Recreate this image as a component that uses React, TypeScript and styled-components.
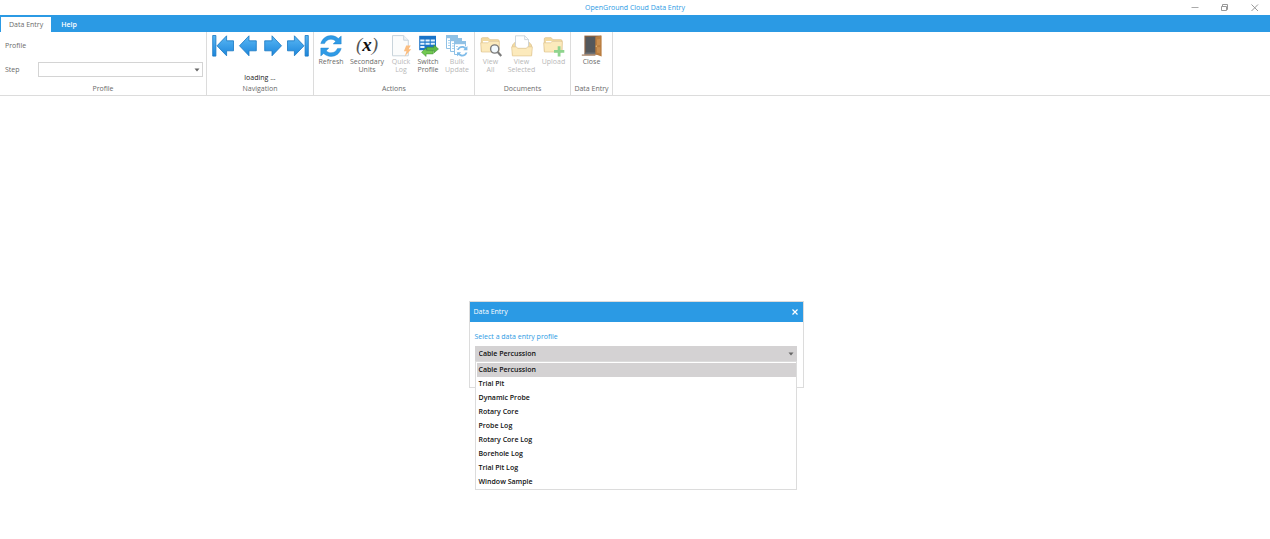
import React, { useState } from 'react';
import styled, { createGlobalStyle, css } from 'styled-components';

const blue = '#2b9ae4';
const line = '#dcdcdc';

const GlobalStyle = createGlobalStyle`
  * { box-sizing: border-box; }
  body {
    margin: 0;
    background: #fff;
    color: #6a6a6a;
    font-family: "Open Sans", "Noto Sans", sans-serif;
    font-size: 7px;
    line-height: 8px;
  }
  button, select { font: inherit; color: inherit; }
`;

const resetButton = css`
  border: 0;
  padding: 0;
  margin: 0;
  background: none;
`;

const Page = styled.div`
  display: flex;
  flex-direction: column;
  min-height: 100vh;
`;

const TitleBar = styled.header`
  display: grid;
  grid-template-columns: 1fr auto 1fr;
  align-items: center;
  height: 15px;
`;

const Title = styled.h1`
  grid-column: 2;
  margin: 0;
  font-size: 7px;
  font-weight: 400;
  color: ${blue};
`;

const WindowControls = styled.div`
  display: flex;
  justify-content: flex-end;
  gap: 20px;
  padding-right: 10px;
`;

const WindowButton = styled.button`
  ${resetButton}
  display: flex;
  width: 10px;
  height: 10px;
`;

const TabStrip = styled.nav`
  display: flex;
  height: 17px;
  padding: 2px 1px 0;
  background: ${blue};
`;

const Tab = styled.button<{ $active?: boolean }>`
  ${resetButton}
  padding: 0 8px;
  margin-right: 2px;
  background: ${(p) => (p.$active ? '#fff' : 'transparent')};
  color: ${(p) => (p.$active ? '#6a6a6a' : '#fff')};
  font-weight: ${(p) => (p.$active ? 400 : 600)};
`;

const Ribbon = styled.div`
  display: flex;
  height: 64px;
  border-bottom: 1px solid ${line};
`;

const Group = styled.section<{ $width: number }>`
  display: flex;
  flex-direction: column;
  flex: 0 0 ${(p) => p.$width}px;
  border-right: 1px solid ${line};
`;

const GroupBody = styled.div`
  display: flex;
  flex: 1;
  justify-content: center;
  padding-top: 3px;
`;

const GroupLabel = styled.h2`
  margin: 0;
  padding-bottom: 2px;
  font-size: 7px;
  font-weight: 400;
  text-align: center;
`;

const Fields = styled.div`
  display: grid;
  flex: 1;
  grid-template-columns: 33px 1fr;
  grid-template-rows: 15px 15px;
  row-gap: 9px;
  align-items: center;
  align-content: start;
  padding: 6px 3px 0 5px;
`;

const SelectBox = styled.div`
  display: grid;
  align-items: center;
  & > * { grid-area: 1 / 1; }
  & > svg { justify-self: end; margin-right: 3px; pointer-events: none; }
`;

const Select = styled.select<{ $filled?: boolean }>`
  appearance: none;
  width: 100%;
  height: 15px;
  padding: 0 3px;
  border: 1px solid ${(p) => (p.$filled ? '#d4d2d3' : '#d4d4d4')};
  border-radius: 0;
  background: ${(p) => (p.$filled ? '#d4d2d3' : '#fff')};
  color: #111;
  font-weight: ${(p) => (p.$filled ? 600 : 400)};
  outline: none;
`;

const Navigation = styled.div`
  display: flex;
  flex-direction: column;
  justify-content: space-between;
`;

const NavButtons = styled.div`
  display: flex;
  gap: 3px;
`;

const IconButton = styled.button`
  ${resetButton}
  display: flex;
`;

const Status = styled.output`
  padding-bottom: 3px;
  color: #222;
  text-align: center;
`;

const Tool = styled.button<{ $width: number }>`
  ${resetButton}
  display: flex;
  flex-direction: column;
  align-items: center;
  gap: 1px;
  width: ${(p) => p.$width}px;
  text-align: center;
  &:disabled { color: #b8b8b8; }
  &:disabled svg { opacity: 0.55; }
`;

const ToolLabel = styled.span`
  width: min-content;
  white-space: pre;
`;

const FormulaIcon = styled.span`
  height: 22px;
  color: #555;
  font: italic 19px/20px "Liberation Serif", serif;
  & > b { color: #111; }
`;

const Workspace = styled.main`
  display: flex;
  flex: 1;
  align-items: flex-start;
  justify-content: center;
  padding: 205px 8px 110px 10px;
`;

const Dialog = styled.section`
  width: 335px;
  max-width: 100%;
  border: 1px solid ${line};
`;

const DialogHeader = styled.header`
  display: flex;
  align-items: center;
  justify-content: space-between;
  height: 20px;
  padding: 0 4px;
  background: ${blue};
  color: #fff;
`;

const DialogTitle = styled.h2`
  margin: 0;
  font-size: 7px;
  font-weight: 400;
`;

const DialogBody = styled.div`
  display: flex;
  flex-direction: column;
  gap: 5px;
  height: 65px;
  padding: 11px 6px 0 5px;
`;

const Prompt = styled.label`
  color: ${blue};
`;

const Dropdown = styled.div`
  position: relative;
`;

const OptionList = styled.div`
  position: absolute;
  top: 100%;
  left: 0;
  right: 0;
  padding: 1px 0 0 1px;
  border: 1px solid ${line};
  background: #fff;
`;

const Option = styled.button`
  ${resetButton}
  display: block;
  width: 100%;
  height: 14px;
  padding: 0 2px;
  color: #111;
  font-weight: 600;
  text-align: left;
  &[aria-selected='true'] { background: #d4d2d3; }
`;

const Caret = () => (
  <svg width="6" height="4" viewBox="0 0 6 4"><path d="M.5.5h5L3 3.5z" fill="#666" /></svg>
);

const ArrowIcon = ({ bar, flip }: { bar?: boolean; flip?: boolean }) => (
  <svg width="22" height="22" viewBox="0 0 22 22">
    <defs>
      <linearGradient id="arrowFill" x1="0" y1="0" x2="0" y2="1">
        <stop offset="0" stopColor="#5bb8f4" />
        <stop offset="1" stopColor="#1c86dc" />
      </linearGradient>
    </defs>
    <g transform={flip ? 'translate(22 0) scale(-1 1)' : undefined} fill="url(#arrowFill)" stroke="#1877c2" strokeWidth=".8" strokeLinejoin="round">
      {bar && <path d="M.7.5h3.2v20.6H.7z" />}
      <path d={bar ? 'M5 10.8 14.6.8v5h6.9v10h-6.9v5z' : 'M2.5 10.8 12 .8v5h7.3v10H12v5z'} />
    </g>
  </svg>
);

const refreshPath = 'M.8 8.6C2.2 3.6 6.2.6 11 .6c2.9 0 5.4 1.1 7.3 2.9L21.2 1v8h-8l2.5-2.7C14.4 4.9 12.9 4.2 11 4.2 8 4.2 5.7 5.8 4.5 8.6z';

const RefreshShape = () => (
  <>
    <path d={refreshPath} />
    <path d={refreshPath} transform="rotate(180 11 11)" />
  </>
);

const RefreshIcon = () => (
  <svg width="22" height="22" viewBox="0 0 22 22" fill="#2f9be6" stroke="#1a7cc4" strokeWidth=".4">
    <RefreshShape />
  </svg>
);

const QuickLogIcon = () => (
  <svg width="22" height="22" viewBox="0 0 22 22">
    <path d="M2.5.6h11.2l4.6 4.6v15.6H2.5z" fill="#f8fafb" stroke="#9db1bf" />
    <path d="M13.7.6v4.6h4.6" fill="#e3eaef" stroke="#9db1bf" />
    <path d="M16.2 10.5h4.6l-2.2 3.8h2.7l-6.6 7.2 1.8-5.2h-2.6z" fill="#f98a1c" />
  </svg>
);

const SwitchIcon = () => (
  <svg width="22" height="22" viewBox="0 0 22 22">
    <path d="M2.2.8h16.8v14.4H2.2z" fill="#1b74c9" />
    <path d="M3.3 4.4h4.2v2.1H3.3zm5.2 0h4.2v2.1H8.5zm5.2 0h4.2v2.1h-4.2zM3.3 7.7h4.2v2.1H3.3zm5.2 0h4.2v2.1H8.5zm5.2 0h4.2v2.1h-4.2zM3.3 11h4.2v2.1H3.3z" fill="#e4f3fd" />
    <path d="m21.5 14-4.6-4.2v2.5H9.8v3.3h7.1V18z" fill="#5db944" stroke="#3b8a30" strokeWidth=".5" />
    <path d="m4.5 17.3 4.6-4.2v2.5h7.1v3.3H9.1v2.6z" fill="#72c952" stroke="#3b8a30" strokeWidth=".5" />
  </svg>
);

const Sheet = ({ x, y }: { x: number; y: number }) => (
  <g transform={`translate(${x} ${y})`}>
    <path d="M.5.5h11v13H.5z" fill="#fff" stroke="#378fd1" />
    <path d="M0 0h12v3.2H0z" fill="#378fd1" />
    <path d="M2 5.5h2M5 5.5h5M2 8h2M5 8h5M2 10.5h2M5 10.5h5" stroke="#5faee2" />
  </g>
);

const BulkIcon = () => (
  <svg width="22" height="22" viewBox="0 0 22 22">
    <Sheet x={0} y={0} />
    <Sheet x={4} y={3} />
    <Sheet x={8} y={6} />
    <circle cx="16" cy="16" r="6" fill="#fff" />
    <g transform="translate(10.6 10.6) scale(.51)" fill="#1886d8"><RefreshShape /></g>
  </svg>
);

const Folder = () => (
  <>
    <path d="M1.3 16.5V3.9c0-.7.4-1.2 1.2-1.2h5.7l1.7 2h8c.7 0 1.1.4 1.1 1v10.8z" fill="#e9bd55" stroke="#bb8b2c" strokeWidth=".7" />
    <path d="M3 6h14.8v3H3z" fill="#fff" />
    <path d="M.7 7.8h6.8l1.5-1.3h10.4L18.7 17H1.5z" fill="#fad986" stroke="#c99a3c" strokeWidth=".7" />
  </>
);

const ViewAllIcon = () => (
  <svg width="22" height="22" viewBox="0 0 22 22">
    <Folder />
    <circle cx="14.7" cy="14" r="4.1" fill="#e9f5fc" stroke="#111" strokeWidth="1.4" />
    <path d="m17.7 17 3.6 4" stroke="#111" strokeWidth="2.2" />
  </svg>
);

const ViewSelectedIcon = () => (
  <svg width="22" height="22" viewBox="0 0 22 22">
    <path d="M1.5 20V10l2.8-3h13.5l2.7 3v10z" fill="#e9bd55" stroke="#bb8b2c" strokeWidth=".7" />
    <path d="M4.5.8h9.2l3.8 3.8v9H4.5z" fill="#fff" stroke="#98a7b2" strokeWidth=".8" />
    <path d="M13.7.8v3.8h3.8" fill="none" stroke="#98a7b2" strokeWidth=".8" />
    <path d="M.6 11.8h4.8l1.2 1.5h8.8l1.2-1.5h4.8l-.8 9.1H1.4z" fill="#fad986" stroke="#c99a3c" strokeWidth=".7" />
  </svg>
);

const UploadIcon = () => (
  <svg width="22" height="22" viewBox="0 0 22 22">
    <Folder />
    <path d="M14.7 11.2h2.8v3.7h3.8v2.8h-3.8v3.8h-2.8v-3.8H11v-2.8h3.7z" fill="#32b232" />
  </svg>
);

const DoorIcon = () => (
  <svg width="22" height="22" viewBox="0 0 22 22">
    <path d="M3.4.6H20v19H3.4z" fill="#8a6142" />
    <path d="M4.6 1.8h10V19h-10z" fill="#54585c" />
    <path d="M4.6 17.6h10v1.6H3.2z" fill="#6d7175" />
    <path d="M14.4 1.8 20.6.4v21.2l-6.2-2.4z" fill="#b97d40" />
    <path d="m16 4.4 3.2-.7v6.4l-3.2.3zm0 7.6 3.2.2v6.2L16 17.4z" fill="#c98f50" />
    <path d="M.8 19.5h13.6v1.2H.8z" fill="#a07a5c" />
    <circle cx="15.3" cy="11.2" r=".6" fill="#f1d38b" />
  </svg>
);

const profiles = [
  'Cable Percussion', 'Trial Pit', 'Dynamic Probe', 'Rotary Core', 'Probe Log',
  'Rotary Core Log', 'Borehole Log', 'Trial Pit Log', 'Window Sample',
];

interface ToolItem {
  label: string;
  width: number;
  icon: React.ReactNode;
  disabled?: boolean;
}

const actions: ToolItem[] = [
  { label: 'Refresh', width: 30, icon: <RefreshIcon /> },
  { label: 'Secondary\nUnits', width: 42, icon: <FormulaIcon>(<b>x</b>)</FormulaIcon> },
  { label: 'Quick\nLog', width: 26, icon: <QuickLogIcon />, disabled: true },
  { label: 'Switch\nProfile', width: 28, icon: <SwitchIcon /> },
  { label: 'Bulk\nUpdate', width: 30, icon: <BulkIcon />, disabled: true },
];

const documents: ToolItem[] = [
  { label: 'View\nAll', width: 28, icon: <ViewAllIcon />, disabled: true },
  { label: 'View\nSelected', width: 34, icon: <ViewSelectedIcon />, disabled: true },
  { label: 'Upload', width: 30, icon: <UploadIcon />, disabled: true },
];

const closing: ToolItem[] = [{ label: 'Close', width: 30, icon: <DoorIcon /> }];

const ToolGroup = ({ name, width, tools }: { name: string; width: number; tools: ToolItem[] }) => (
  <Group $width={width}>
    <GroupBody>
      {tools.map((t) => (
        <Tool key={t.label} $width={t.width} disabled={t.disabled}>
          {t.icon}
          <ToolLabel>{t.label}</ToolLabel>
        </Tool>
      ))}
    </GroupBody>
    <GroupLabel>{name}</GroupLabel>
  </Group>
);

export default function App() {
  const [profile, setProfile] = useState(profiles[0]);
  return (
    <Page>
      <GlobalStyle />
      <TitleBar>
        <Title>OpenGround Cloud Data Entry</Title>
        <WindowControls>
          <WindowButton aria-label="Minimize">
            <svg width="10" height="10" viewBox="0 0 10 10"><path d="M1.5 4.5h7" stroke="#aaa" /></svg>
          </WindowButton>
          <WindowButton aria-label="Restore">
            <svg width="10" height="10" viewBox="0 0 10 10" fill="none" stroke="#999"><path d="M1.5 3.5h5v4h-5zM2.5 3V1.5h5v5H7" /></svg>
          </WindowButton>
          <WindowButton aria-label="Close window">
            <svg width="10" height="10" viewBox="0 0 10 10"><path d="m1.5 1.5 6.5 6.5M8 1.5 1.5 8" stroke="#999" /></svg>
          </WindowButton>
        </WindowControls>
      </TitleBar>
      <TabStrip>
        <Tab $active>Data Entry</Tab>
        <Tab>Help</Tab>
      </TabStrip>
      <Ribbon>
        <Group $width={207}>
          <Fields>
            <span>Profile</span>
            <span />
            <label htmlFor="step">Step</label>
            <SelectBox>
              <Select id="step" />
              <Caret />
            </SelectBox>
          </Fields>
          <GroupLabel>Profile</GroupLabel>
        </Group>
        <Group $width={107}>
          <GroupBody>
            <Navigation>
              <NavButtons>
                <IconButton aria-label="First"><ArrowIcon bar /></IconButton>
                <IconButton aria-label="Previous"><ArrowIcon /></IconButton>
                <IconButton aria-label="Next"><ArrowIcon flip /></IconButton>
                <IconButton aria-label="Last"><ArrowIcon bar flip /></IconButton>
              </NavButtons>
              <Status>loading ...</Status>
            </Navigation>
          </GroupBody>
          <GroupLabel>Navigation</GroupLabel>
        </Group>
        <ToolGroup name="Actions" width={161} tools={actions} />
        <ToolGroup name="Documents" width={96} tools={documents} />
        <ToolGroup name="Data Entry" width={42} tools={closing} />
      </Ribbon>
      <Workspace>
        <Dialog role="dialog" aria-labelledby="dialog-title">
          <DialogHeader>
            <DialogTitle id="dialog-title">Data Entry</DialogTitle>
            <IconButton aria-label="Close dialog">
              <svg width="8" height="8" viewBox="0 0 8 8"><path d="m1.5 1.5 5 5M6.5 1.5l-5 5" stroke="#fff" strokeWidth="1.2" /></svg>
            </IconButton>
          </DialogHeader>
          <DialogBody>
            <Prompt htmlFor="profile">Select a data entry profile</Prompt>
            <Dropdown>
              <SelectBox>
                <Select id="profile" $filled value={profile} onChange={(e) => setProfile(e.target.value)}>
                  {profiles.map((p) => <option key={p}>{p}</option>)}
                </Select>
                <Caret />
              </SelectBox>
              <OptionList role="listbox" aria-label="Profiles">
                {profiles.map((p) => (
                  <Option key={p} role="option" aria-selected={p === profile} onClick={() => setProfile(p)}>{p}</Option>
                ))}
              </OptionList>
            </Dropdown>
          </DialogBody>
        </Dialog>
      </Workspace>
    </Page>
  );
}
